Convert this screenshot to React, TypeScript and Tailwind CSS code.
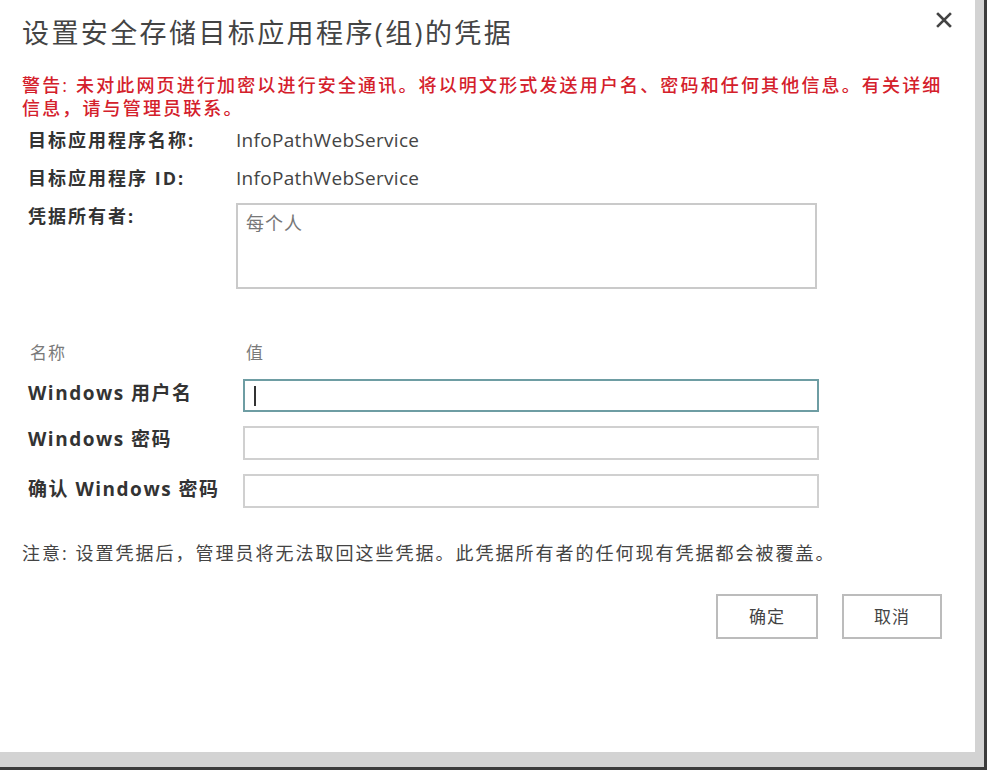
import React from "react";

const FONT = "font-['Open_Sans','Noto_Sans_CJK_SC',sans-serif]";

export default function App() {
  return (
    <div className={`w-[989px] h-[772px] bg-white ${FONT}`}>
      <div className="w-[987px] h-[770px] bg-[#d3d3d3] border-r-[3px] border-b-[3px] border-[#3c3c3c]">
        <div className="w-[975px] h-[752px] bg-white flex flex-col px-[22px]">
          {/* Title */}
          <div className="flex items-start justify-between pt-[15px]">
            <div className="text-[27px] leading-[36px] tracking-[2.4px] text-[#444]">
              设置安全存储目标应用程序(组)的凭据
            </div>
            <svg width="16" height="16" viewBox="0 0 16 16" className="mt-[-3px] mr-[1px]">
              <path d="M2 2 L14 14 M14 2 L2 14" stroke="#444" strokeWidth="2.6" strokeLinecap="square" />
            </svg>
          </div>

          {/* Warning */}
          <div className="mt-[23px] text-[18px] leading-[23px] tracking-[2.15px] text-[#d4202b] font-medium pr-[4px]">
            警告: 未对此网页进行加密以进行安全通讯。将以明文形式发送用户名、密码和任何其他信息。有关详细信息，请与管理员联系。
          </div>

          {/* Info */}
          <div className="mt-[1px] pl-[6px] grid grid-cols-[208px_1fr] text-[18px]">
            <div className="leading-[38px] font-bold tracking-[2px] text-[#333]">目标应用程序名称:</div>
            <div className="leading-[38px] text-[19px] tracking-[0.3px] text-[#444]">InfoPathWebService</div>
            <div className="leading-[38px] font-bold tracking-[2px] text-[#333]">目标应用程序 ID:</div>
            <div className="leading-[38px] text-[19px] tracking-[0.3px] text-[#444]">InfoPathWebService</div>
            <div className="leading-[38px] font-bold tracking-[2px] text-[#333]">凭据所有者:</div>
            <div className="pt-[6px]">
              <div className="w-[581px] h-[86px] border-2 border-[#cacaca] pl-[8px] pt-[6px] text-[18px] leading-[24px] tracking-[1px] text-[#777]">
                每个人
              </div>
            </div>
          </div>

          {/* Credentials */}
          <div className="mt-[52px] pl-[8px] grid grid-cols-[213px_1fr] text-[17px] leading-[24px] text-[#7a7a7a] tracking-[1px]">
            <div>名称</div>
            <div className="pl-[3px]">值</div>
          </div>

          <div className="mt-[14px] pl-[6px] flex flex-col gap-[14px]">
            <div className="flex items-center">
              <div className="w-[215px] pb-[6px] text-[19px] leading-[24px] font-bold tracking-[1.5px] text-[#333]">Windows 用户名</div>
              <div className="w-[576px] h-[33px] border-2 border-[#6e9da3] flex items-center pl-[9px]">
                <div className="w-[2px] h-[20px] bg-[#333]" />
              </div>
            </div>
            <div className="flex items-center">
              <div className="w-[215px] pb-[8px] text-[19px] leading-[24px] font-bold tracking-[1.5px] text-[#333]">Windows 密码</div>
              <div className="w-[576px] h-[34px] border-2 border-[#d0d0d0]" />
            </div>
            <div className="flex items-center">
              <div className="w-[215px] pb-[4px] text-[19px] leading-[24px] font-bold tracking-[1.5px] text-[#333]">确认 Windows 密码</div>
              <div className="w-[576px] h-[34px] border-2 border-[#d0d0d0]" />
            </div>
          </div>

          {/* Note */}
          <div className="mt-[32px] text-[18px] leading-[26px] tracking-[2px] text-[#444]">
            注意: 设置凭据后，管理员将无法取回这些凭据。此凭据所有者的任何现有凭据都会被覆盖。
          </div>

          {/* Buttons */}
          <div className="mt-[28px] flex justify-end gap-[24px] pr-[11px]">
            <div className="w-[102px] h-[45px] border-2 border-[#bcbcbc] flex items-center justify-center text-[17px] tracking-[1px] text-[#444]">
              确定
            </div>
            <div className="w-[100px] h-[45px] border-2 border-[#bcbcbc] flex items-center justify-center text-[17px] tracking-[1px] text-[#444]">
              取消
            </div>
          </div>
        </div>
      </div>
    </div>
  );
}
